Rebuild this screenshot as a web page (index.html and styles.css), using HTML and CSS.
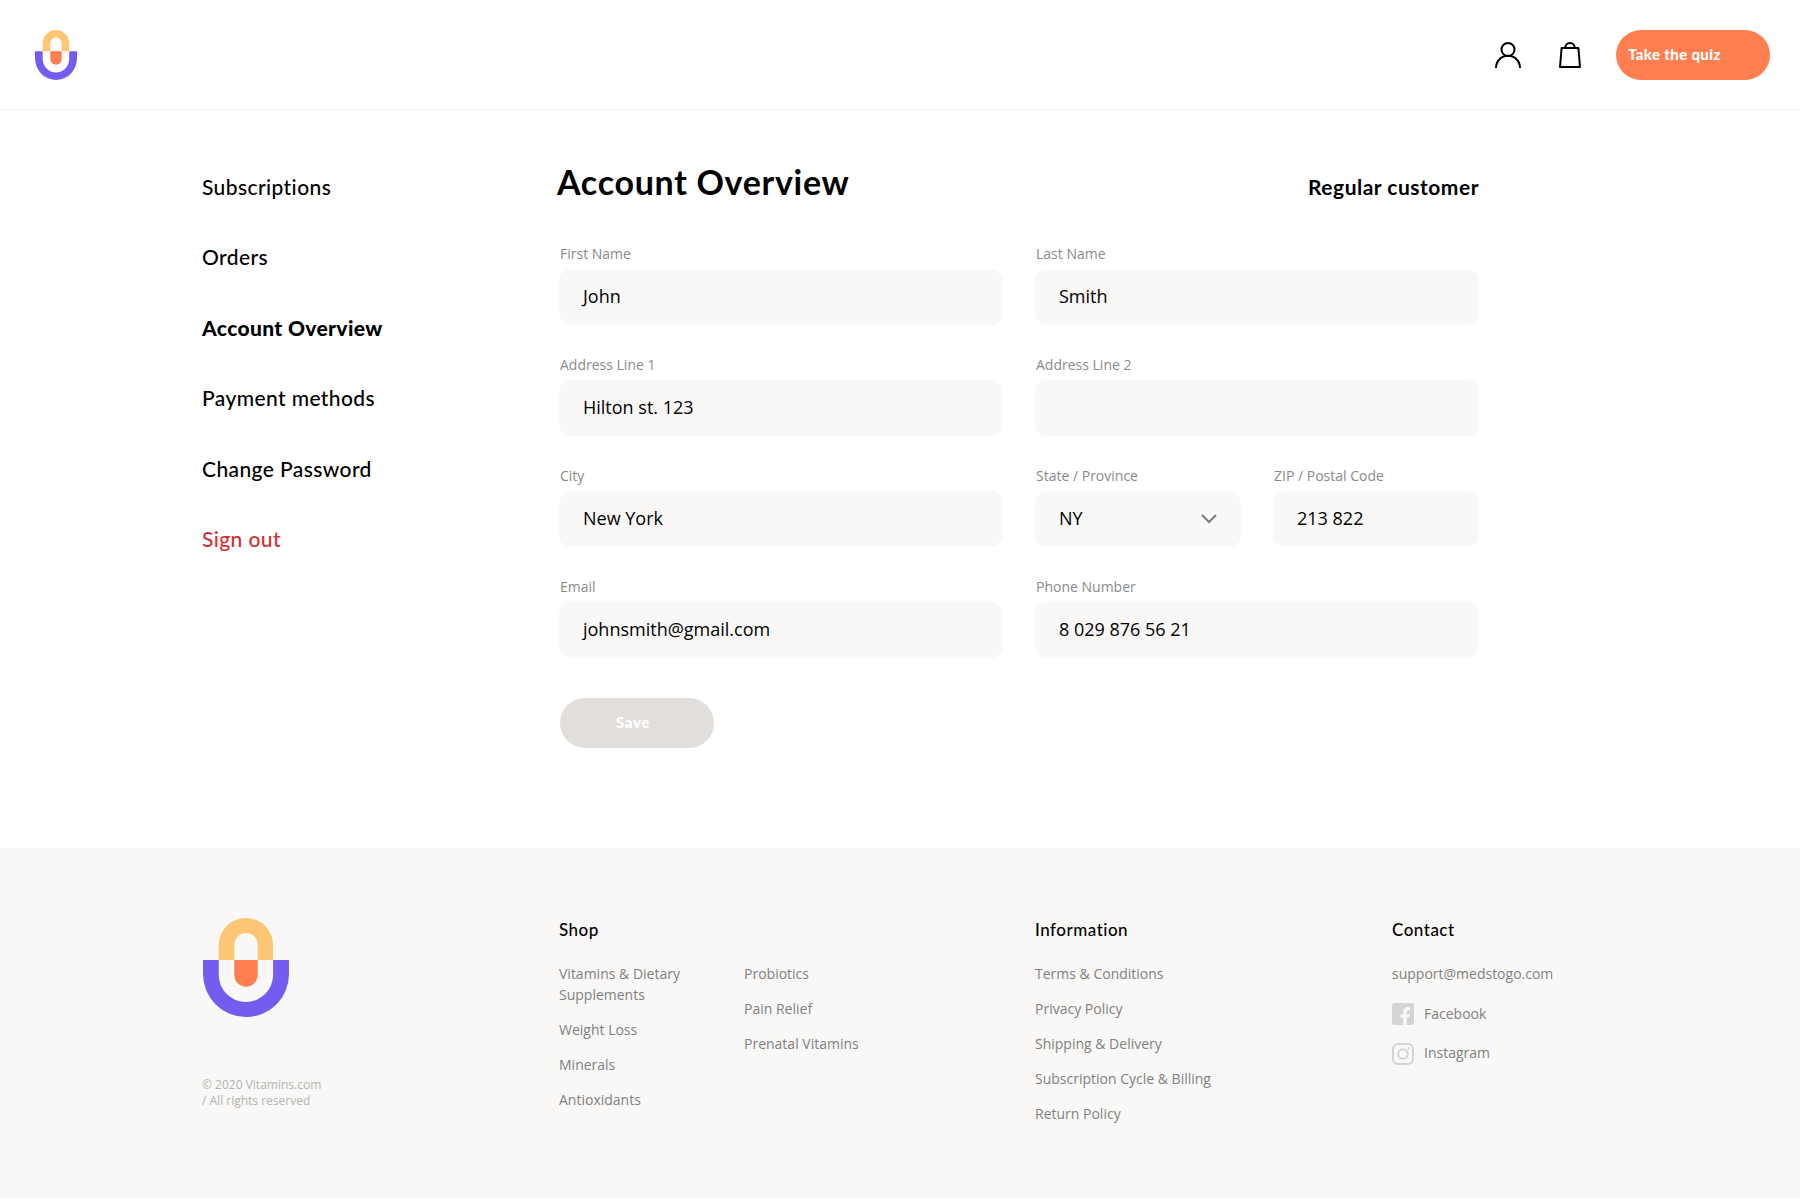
FILE: index.html
```html
<!DOCTYPE html>
<html lang="en">
<head>
<meta charset="utf-8">
<title>Account Overview</title>
<link rel="stylesheet" href="styles.css">
</head>
<body>
<svg class="sprite" aria-hidden="true">
  <symbol id="logo" viewBox="0 0 86 99" preserveAspectRatio="none">
    <path fill="#fdc674" d="M15.7 42V27.2a27.2 27.2 0 0 1 54.4 0V42H54.7V26.7a11.7 11.7 0 0 0-23.4 0V42z"/>
    <path fill="#ff7e50" d="M31.3 42h23.4v15a11.7 11.7 0 0 1-23.4 0z"/>
    <path fill="#735cef" d="M0 42h15.7v14.8a27.2 27.2 0 0 0 54.4 0V42H86v14a43 43 0 0 1-86 0z"/>
  </symbol>
</svg>
<header class="header">
  <a class="header-logo"><svg width="42" height="50"><use href="#logo"/></svg></a>
  <div class="header-actions">
    <svg class="icon-user" width="26" height="26" viewBox="0 0 26 26" fill="none" stroke="#000" stroke-width="2"><circle cx="13" cy="7.5" r="6.5"/><path d="M1 26c0-7.2 5.4-12.2 12-12.2S25 18.800 25 26"/></svg>
    <svg class="icon-bag" width="22" height="26" viewBox="0 0 22 26" fill="none" stroke="#000" stroke-width="2" stroke-linejoin="round"><path d="M2.600 6h16.800L21 25H1z"/><path d="M6.200 6c0-3 2-5 4.800-5s4.800 2 4.800 5"/></svg>
    <a class="btn btn-quiz">Take the quiz</a>
  </div>
</header>
<main class="main">
  <nav class="nav">
    <a>Subscriptions</a>
    <a>Orders</a>
    <a class="active">Account Overview</a>
    <a>Payment methods</a>
    <a>Change Password</a>
    <a class="signout">Sign out</a>
  </nav>
  <section class="account">
    <div class="account-head">
      <h1>Account Overview</h1>
      <p class="status">Regular customer</p>
    </div>
    <div class="form">
      <div class="field wide"><label>First Name</label><div class="input">John</div></div>
      <div class="field wide"><label>Last Name</label><div class="input">Smith</div></div>
      <div class="field wide"><label>Address Line 1</label><div class="input">Hilton st. 123</div></div>
      <div class="field wide"><label>Address Line 2</label><div class="input"></div></div>
      <div class="field wide"><label>City</label><div class="input">New York</div></div>
      <div class="field"><label>State / Province</label><div class="input select">NY<svg width="16" height="10" viewBox="0 0 16 10" fill="none" stroke="#7d7d7d" stroke-width="2"><path d="M1 1l7 7 7-7"/></svg></div></div>
      <div class="field"><label>ZIP / Postal Code</label><div class="input">213 822</div></div>
      <div class="field wide"><label>Email</label><div class="input">johnsmith@gmail.com</div></div>
      <div class="field wide"><label>Phone Number</label><div class="input">8 029 876 56 21</div></div>
    </div>
    <a class="btn btn-save">Save</a>
  </section>
</main>
<footer class="footer">
  <div class="brand">
    <svg width="86" height="99"><use href="#logo"/></svg>
    <p>© 2020 Vitamins.com<br>/ All rights reserved</p>
  </div>
  <div class="col shop">
    <h2>Shop</h2>
    <div class="lists">
      <ul><li>Vitamins &amp; Dietary Supplements</li><li>Weight Loss</li><li>Minerals</li><li>Antioxidants</li></ul>
      <ul><li>Probiotics</li><li>Pain Relief</li><li>Prenatal Vitamins</li></ul>
    </div>
  </div>
  <div class="col info">
    <h2>Information</h2>
    <ul><li>Terms &amp; Conditions</li><li>Privacy Policy</li><li>Shipping &amp; Delivery</li><li>Subscription Cycle &amp; Billing</li><li>Return Policy</li></ul>
  </div>
  <div class="col contact">
    <h2>Contact</h2>
    <p>support@medstogo.com</p>
    <a class="social"><svg width="22" height="22" viewBox="0 0 22 22"><path fill="#d5d4d2" d="M2.500 0h17A2.500 2.500 0 0 1 22 2.500v17a2.500 2.500 0 0 1-2.500 2.500h-4.800v-7.500h2.700l.6-3h-3.300V9.200c0-1.300.7-2.100 2-2.100H18V4.200c-.6-.1-1.300-.2-2.200-.2-2.800 0-4.600 1.700-4.600 4.600v2.900H8.200v3h3V22H2.500A2.500 2.500 0 0 1 0 19.500v-17A2.500 2.500 0 0 1 2.500 0z"/></svg><span>Facebook</span></a>
    <a class="social instagram"><svg width="22" height="22" viewBox="0 0 22 22" fill="none" stroke="#d5d4d2" stroke-width="2"><rect x="1" y="1" width="20" height="20" rx="5"/><circle cx="11" cy="11" r="4.800"/><circle cx="16.800" cy="5.200" r="1.200" fill="#d5d4d2" stroke="none"/></svg><span>Instagram</span></a>
  </div>
</footer>
</body>
</html>
```
FILE: styles.css
```css
* { box-sizing: border-box; }
body, h1, h2, p, ul { margin: 0; padding: 0; }
body {
  width: 1800px;
  height: 1198px;
  background: #fff;
  color: #000;
  font-family: "Open Sans", "Noto Sans", sans-serif;
  display: flex;
  flex-direction: column;
}
ul { list-style: none; }
svg { display: block; flex: none; }
.sprite { position: absolute; width: 0; height: 0; }

.header {
  height: 111px;
  padding: 1px 30px 0 35px;
  border-bottom: 2px solid #f6f6f6;
  display: flex;
  align-items: center;
  justify-content: space-between;
}
.header-actions { display: flex; align-items: center; }
.icon-user { margin-right: 38px; }
.icon-bag { margin-right: 35px; }
.btn {
  width: 154px;
  height: 50px;
  padding-bottom: 2px;
  border-radius: 25px;
  display: flex;
  align-items: center;
  color: #fff;
  font: 900 15px/20px Lato, sans-serif;
  letter-spacing: 0.35px;
}
.btn-quiz { background: #ff7e50; padding-left: 12px; }
.btn-save {
  background: #e1dedb;
  justify-content: center;
  margin: 40px 0 0 1px;
  padding-right: 8px;
  letter-spacing: 0.7px;
}

.main {
  height: 737px;
  padding: 50px 0 0 202px;
  display: flex;
}
.nav {
  width: 357px;
  padding-top: 11px;
  display: flex;
  flex-direction: column;
  font: 500 21px/30px Lato, sans-serif;
  letter-spacing: 0.4px;
  font-variant-ligatures: none;
}
.nav a { height: 70.4px; }
.nav .active { font-weight: 900; letter-spacing: 0.35px; }
.nav .signout { color: #d32f2f; }
.account { width: 920px; }
.account-head {
  height: 83px;
  display: flex;
  justify-content: space-between;
  font-family: Lato, sans-serif;
}
h1 {
  margin-left: -2px;
  font-size: 34px;
  line-height: 42px;
  font-weight: 700;
  letter-spacing: 0.7px;
}
.status {
  padding-top: 11px;
  font-size: 21px;
  line-height: 30px;
  font-weight: 700;
  letter-spacing: 0.5px;
}

.form {
  display: grid;
  grid-template-columns: repeat(4, 206px);
  gap: 30px 32px;
}
.wide { grid-column: span 2; }
.field label {
  display: block;
  height: 25px;
  padding: 0 1px;
  color: #8a8a8a;
  font-size: 14px;
  line-height: 19px;
}
.input {
  height: 56px;
  padding: 0 24px 2px;
  border-radius: 12px;
  background: #f9f8f6;
  display: flex;
  align-items: center;
  justify-content: space-between;
  font-size: 18px;
  line-height: 24px;
}
.select svg { margin-top: 2px; }

.footer {
  height: 350px;
  padding: 70px 0 0 202px;
  background: #f9f8f6;
  display: flex;
  color: #808080;
  font-size: 14px;
  line-height: 21px;
}
.brand { width: 357px; }
.brand svg { margin-left: 1px; }
.brand p { margin-top: 60px; color: #b3b3b1; font-size: 12px; line-height: 16px; }
.footer h2 {
  height: 45px;
  color: #000;
  font: 500 17px/23px Lato, sans-serif;
  letter-spacing: 0.5px;
  font-variant-ligatures: none;
}
.shop { width: 476px; }
.info { width: 357px; }
.lists { display: flex; gap: 45px; }
.lists ul { width: 140px; }
li { margin-bottom: 14px; }
.contact p { margin-bottom: 19px; }
.social { display: flex; align-items: center; gap: 10px; height: 22px; margin-bottom: 18px; }
.social span { margin-bottom: 2px; }
.instagram span { margin-bottom: 4px; }
```
